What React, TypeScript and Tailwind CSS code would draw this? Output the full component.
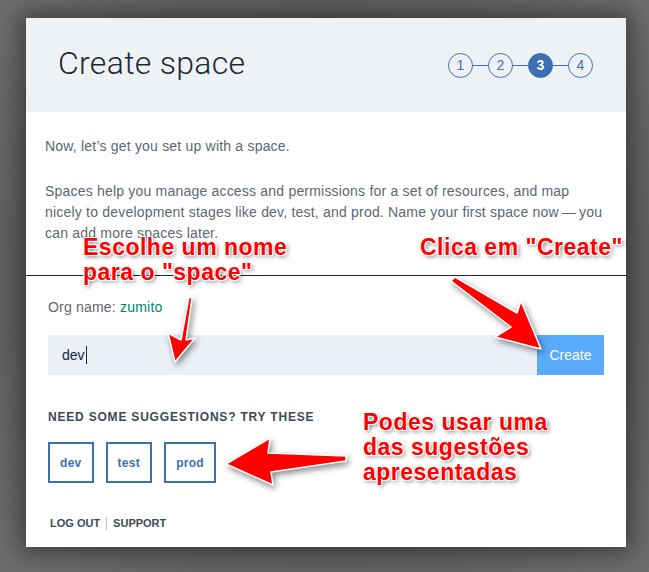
import React from "react";

const steps = [1, 2, 3, 4];
const suggestions = ["dev", "test", "prod"];

const note =
  "absolute font-bold text-[23px] leading-[25px] tracking-[0.5px] text-[#ff0000] whitespace-nowrap [font-family:'Liberation_Sans',Arial,sans-serif] [text-shadow:-1px_-1px_0_#fff,1px_-1px_0_#fff,-1px_1px_0_#fff,1px_1px_0_#fff,0_-1px_0_#fff,0_1px_0_#fff,2px_2px_4px_rgba(0,0,0,0.55)]";

function Stepper({ active }: { active: number }) {
  return (
    <div className="flex items-center">
      {steps.map((s, i) => (
        <React.Fragment key={s}>
          {i > 0 && <div className="w-[15px] h-px bg-[#3d70b2]" />}
          <div
            className={
              s === active
                ? "w-[25px] h-[25px] rounded-full bg-[#3d70b2] border border-[#3d70b2] text-white font-bold text-[14px] flex items-center justify-center"
                : "w-[25px] h-[25px] rounded-full border border-[#3d70b2] text-[#3d70b2] text-[14px] flex items-center justify-center"
            }
          >
            {s}
          </div>
        </React.Fragment>
      ))}
    </div>
  );
}

export default function App() {
  return (
    <div className="relative w-[649px] h-[572px] overflow-hidden bg-[radial-gradient(ellipse_at_center,#565656_0%,#5c5c5c_60%,#6e6e6e_100%)] pt-[18px] pl-[26px] [font-family:'Liberation_Sans',Arial,sans-serif]">
      <div className="w-[600px] h-[529px] bg-white flex flex-col shadow-[0_0_22px_6px_rgba(0,0,0,0.4)]">
        {/* header */}
        <div className="h-[94px] bg-[#eff2f5] flex items-center justify-between pl-[32px] pr-[33px]">
          <h1 className="mb-[5px] text-[32px] leading-[38px] font-light tracking-[0.3px] text-[#1d2a33] [font-family:Roboto,'Liberation_Sans',sans-serif]">
            Create space
          </h1>
          <Stepper active={3} />
        </div>

        {/* intro */}
        <div className="px-[19px] pt-[24px] text-[14px] leading-[21px] tracking-[0.2px] text-[#5a6872]">
          <p>Now, let’s get you set up with a space.</p>
          <p className="mt-[24px]">
            Spaces help you manage access and permissions for a set of resources, and map
            nicely to development stages like dev, test, and prod. Name your first space
            now{"\u2009—\u2009"}you can add more spaces later.
          </p>
        </div>

        <div className="mt-[31px] h-px bg-[#152935]" />

        <div className="px-[22px]">
          <div className="mt-[21px] text-[14px] leading-[21px] tracking-[0.2px] text-[#5a6872]">
            Org name: <span className="text-[#008571]">zumito</span>
          </div>

          <div className="mt-[17px] flex h-[40px]">
            <div className="flex-1 bg-[#ebf0f7] flex items-center pl-[14px] text-[14px] text-[#152935]">
              dev
              <span className="ml-px w-px h-[18px] bg-[#152935]" />
            </div>
            <button className="w-[67px] bg-[#5aaafa] text-white text-[14px]">Create</button>
          </div>

          <div className="mt-[34px] text-[12px] leading-[16px] font-bold tracking-[0.8px] text-[#3b4a55]">
            NEED SOME SUGGESTIONS? TRY THESE
          </div>

          <div className="mt-[17px] flex gap-3">
            {suggestions.map((s) => (
              <button
                key={s}
                className="h-[41px] px-[10px] border-2 border-[#3d70b2] text-[#3d70b2] text-[12px] font-bold tracking-[0.3px]"
              >
                {s}
              </button>
            ))}
          </div>

          <div className="mt-[33px] flex items-center text-[11px] leading-[14px] font-bold text-[#3b4a55]">
            <span className="ml-[2px]">LOG OUT</span>
            <span className="mx-[6px] w-px h-[13px] bg-[#b8c1c8]" />
            <span>SUPPORT</span>
          </div>
        </div>
      </div>

      {/* annotations */}
      <div className={note} style={{ left: 83, top: 235 }}>
        Escolhe um nome
        <br />
        para o "space"
      </div>
      <div className={note} style={{ left: 420, top: 235 }}>
        Clica em "Create"
      </div>
      <div className={note} style={{ left: 363, top: 410 }}>
        Podes usar uma
        <br />
        das sugestões
        <br />
        apresentadas
      </div>

      <svg
        className="absolute left-0 top-0 pointer-events-none [filter:drop-shadow(2px_3px_3px_rgba(0,0,0,0.45))]"
        width="649"
        height="572"
      >
        <g fill="#ff0000" stroke="#ffffff" strokeWidth="1.5" strokeLinejoin="round">
          <polygon points="189,297 192,298 186,340 195,338 175,362 168,333 181,340" />
          <polygon points="451,281 455,277 517,313 521,301 541,349 495,337 511,327" />
          <polygon points="346,456 268,453 270,438 226,464 273,485 271,472 346,461" />
        </g>
      </svg>
    </div>
  );
}
